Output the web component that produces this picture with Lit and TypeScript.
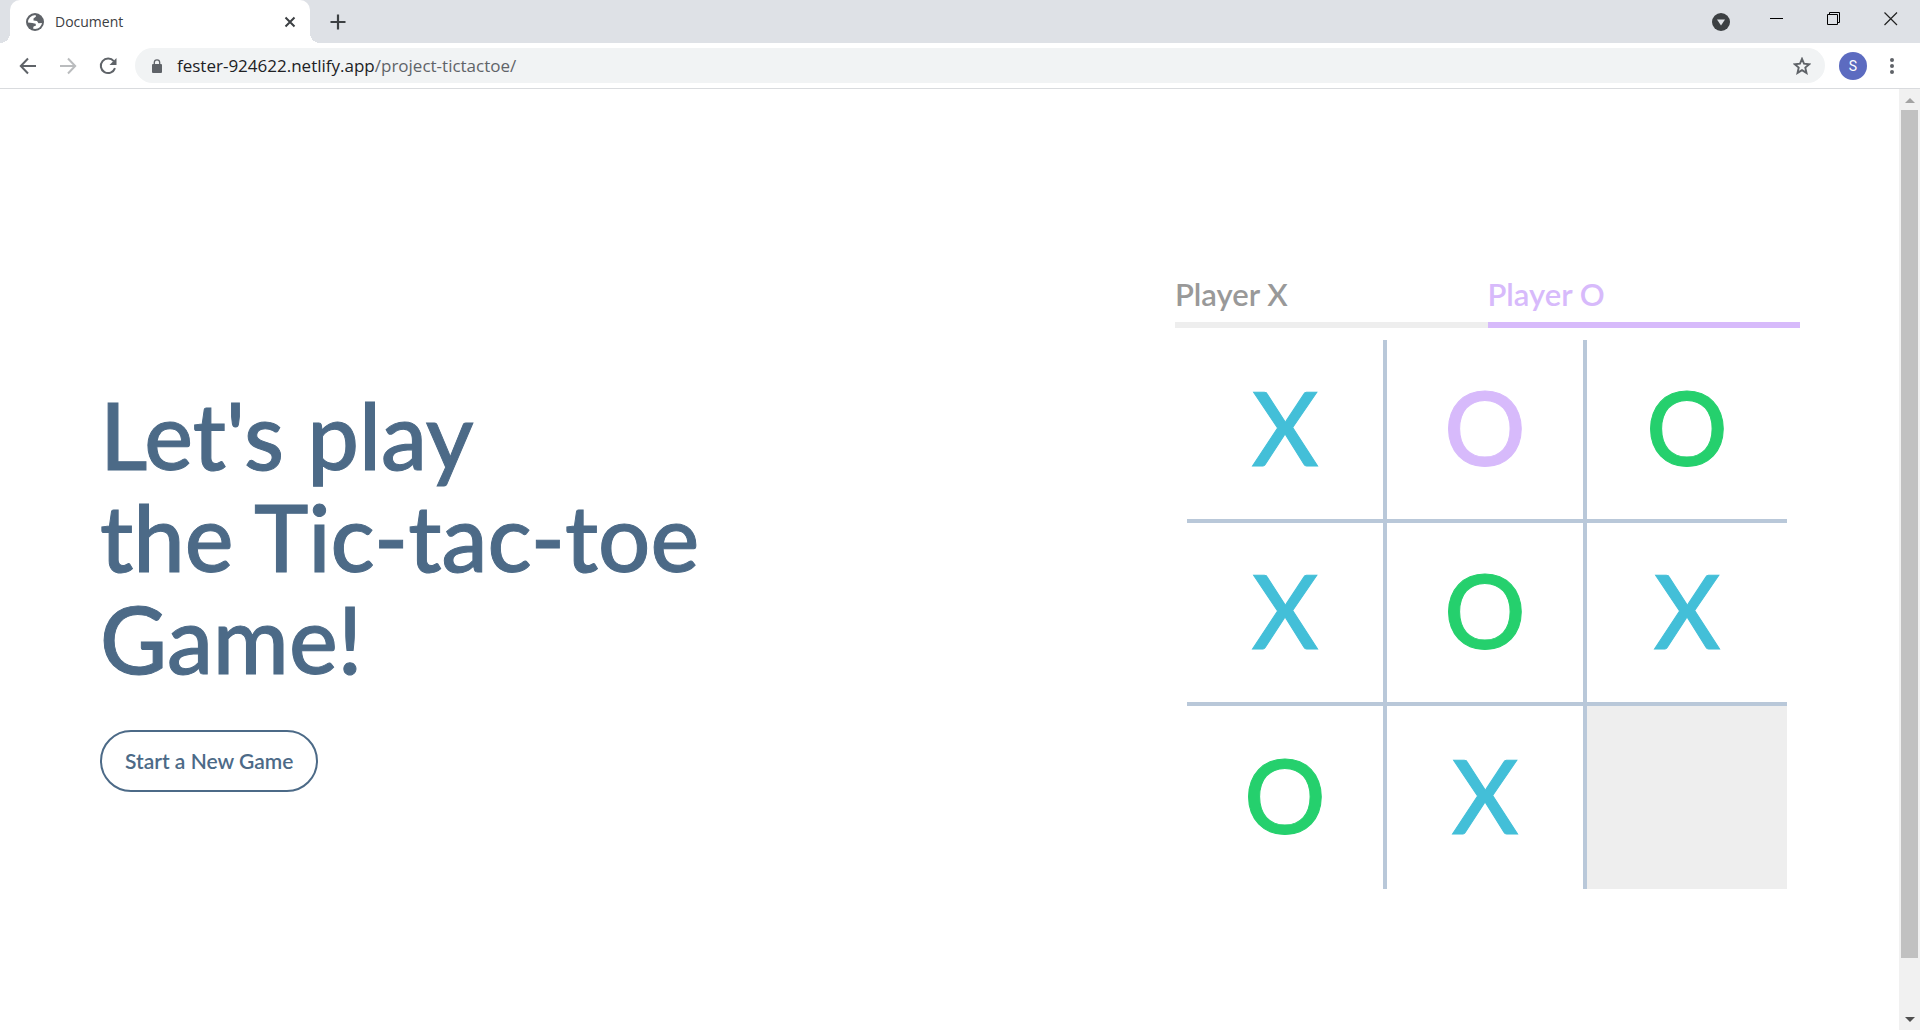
import { LitElement, html, svg, css } from "lit";
import { customElement, state } from "lit/decorators.js";
import { classMap } from "lit/directives/class-map.js";

const icon = (size: number, body: unknown) =>
  html`<svg class="icon" width=${size} height=${size} viewBox="0 0 ${size} ${size}" aria-hidden="true">${body}</svg>`;

const globe = icon(18, svg`
  <circle cx="9" cy="9" r="9" fill="#5f6368"/>
  <path fill="#fff" d="M9.500 2 L10 3.500 L7.500 5.500 L7.500 7.500 L11 8 L12.500 10.300 L16 10 Q15 15.600 9 16 L7 15.600 L7.600 13.600 L10 12.600 L9.600 10.800 L6.400 10 L2 9.600 Q2 3 9.500 2 Z"/>`);
const tabClose = icon(12, svg`<path d="M1.500 1.500 L10.500 10.500 M10.500 1.500 L1.500 10.500" stroke="#3c4043" stroke-width="2" fill="none"/>`);
const plus = icon(16, svg`<path d="M8 0.500 V15.500 M0.500 8 H15.500" stroke="#3c4043" stroke-width="2.200" fill="none"/>`);
const back = icon(18, svg`<path d="M17 9 H2.500 M9 1.500 L1.800 9 L9 16.500" stroke="#5f6368" stroke-width="2" fill="none"/>`);
const forward = icon(18, svg`<path d="M1 9 H15.500 M9 1.500 L16.200 9 L9 16.500" stroke="#babcbe" stroke-width="2" fill="none"/>`);
const reload = icon(18, svg`
  <path d="M14.800 4.200 A7.300 7.300 0 1 0 16 11.200" stroke="#5f6368" stroke-width="2" fill="none"/>
  <path d="M17.500 1 V8 H10.500 Z" fill="#5f6368"/>`);
const lock = icon(14, svg`
  <rect x="2" y="5" width="10" height="9" rx="1" fill="#5f6368"/>
  <path d="M4.300 6 V3.600 A2.700 2.700 0 0 1 9.700 3.600 V6" stroke="#5f6368" stroke-width="1.300" fill="none"/>`);
const star = icon(18, svg`<path d="M9 1.900 L11 6.700 L16.300 7.200 L12.300 10.600 L13.500 15.900 L9 13.100 L4.500 15.900 L5.700 10.600 L1.700 7.200 L7 6.700 Z" stroke="#5f6368" stroke-width="1.900" fill="none"/>`);
const dots = icon(18, svg`<g fill="#5f6368"><circle cx="9" cy="3" r="2"/><circle cx="9" cy="9" r="2"/><circle cx="9" cy="15" r="2"/></g>`);
const tabSearch = icon(18, svg`<circle cx="9" cy="9" r="9" fill="#3c4043"/><path d="M5 6.500 H13 L9 12.500 Z" fill="#dee1e6"/>`);
const minimize = icon(14, svg`<path d="M0 6.500 H13" stroke="#000" fill="none"/>`);
const restore = icon(14, svg`<path d="M0.500 2.500 H10.500 V12.500 H0.500 Z M2.500 2.500 V0.500 H12.500 V10.500 H10.500" stroke="#000" fill="none"/>`);
const windowClose = icon(14, svg`<path d="M0.500 0.500 L13 13 M13 0.500 L0.500 13" stroke="#222" stroke-width="1.200" fill="none"/>`);

@customElement("browser-bar")
class BrowserBar extends LitElement {
  static styles = css`
    :host { display: block; font-family: "Open Sans", "Noto Sans", sans-serif; }
    .icon { display: block; flex: none; }
    button { display: flex; align-items: center; justify-content: center; padding: 0; border: 0; background: none; font: inherit; }
    .tabs { display: flex; height: 43px; background: #dee1e6; padding-left: 10px; }
    .tab { position: relative; display: flex; align-items: center; box-sizing: border-box; width: 300px; padding: 0 14px 0 16px; background: #fff; border-radius: 10px 10px 0 0; }
    .tab::before, .tab::after { content: ""; position: absolute; bottom: 0; width: 10px; height: 10px; }
    .tab::before { left: -10px; background: radial-gradient(circle at 0 0, #dee1e6 10px, #fff 10px); }
    .tab::after { right: -10px; background: radial-gradient(circle at 100% 0, #dee1e6 10px, #fff 10px); }
    .title { flex: 1; padding-left: 11px; font-size: 14px; line-height: 20px; color: #3c4043; }
    .new { width: 16px; margin-left: 20px; }
    .window { display: flex; margin-left: auto; padding-right: 1px; }
    .window button { width: 57px; height: 38px; }
    .window .search { width: 54px; height: 43px; }
    .tools { display: flex; align-items: center; height: 45px; padding: 0 19px 0 8px; border-bottom: 1px solid #d9dbde; background: #fff; }
    .nav { width: 40px; height: 36px; }
    .address { display: flex; flex: 1; align-items: center; height: 35px; margin-left: 7px; border-radius: 18px; background: #f1f3f4; padding: 0 14px 0 15px; }
    .url { flex: 1; padding-left: 13px; font-size: 17px; line-height: 24px; color: #5f6368; text-decoration: none; }
    .domain { color: #202124; }
    .avatar { width: 28px; height: 28px; margin: 0 16px 0 14px; border-radius: 50%; background: #5c6bc0; color: #fff; font-family: Roboto, sans-serif; font-size: 14px; }
  `;
  render() {
    return html`
      <div class="tabs">
        <div class="tab">${globe}<span class="title">Document</span><button aria-label="Close tab">${tabClose}</button></div>
        <button class="new" aria-label="New tab">${plus}</button>
        <div class="window">
          <button class="search" aria-label="Search tabs">${tabSearch}</button>
          <button aria-label="Minimize">${minimize}</button>
          <button aria-label="Restore">${restore}</button>
          <button aria-label="Close">${windowClose}</button>
        </div>
      </div>
      <div class="tools">
        <button class="nav" aria-label="Back">${back}</button>
        <button class="nav" aria-label="Forward" disabled>${forward}</button>
        <button class="nav" aria-label="Reload">${reload}</button>
        <div class="address">
          ${lock}
          <a class="url" href="#"><span class="domain">fester-924622.netlify.app</span>/project-tictactoe/</a>
          <button aria-label="Bookmark this page">${star}</button>
        </div>
        <button class="avatar" aria-label="Profile">S</button>
        <button aria-label="Menu">${dots}</button>
      </div>`;
  }
}

type Mark = "X" | "O" | "";
interface Cell { mark: Mark; last?: boolean; hover?: boolean; }

const position: Cell[] = [
  { mark: "X" }, { mark: "O", last: true }, { mark: "O" },
  { mark: "X" }, { mark: "O" }, { mark: "X" },
  { mark: "O" }, { mark: "X" }, { mark: "", hover: true },
];

@customElement("tic-tac-toe")
class TicTacToe extends LitElement {
  @state() private cells: Cell[] = position;

  static styles = css`
    :host { display: flex; align-items: center; justify-content: space-between; padding: 0 99px 0 100px; font-family: Lato, sans-serif; font-weight: 600; }
    .intro { padding-top: 12px; }
    h1 { margin: 0 0 40px; font-size: 92px; font-weight: 500; line-height: 102px; color: #4c6a87; -webkit-text-stroke: 1px currentColor; }
    h1 span { display: block; }
    button { font: inherit; }
    .start { height: 62px; padding: 0 23px; border: 2px solid #4c6a87; border-radius: 31px; background: #fff; color: #4c6a87; font-size: 21px; }
    .game { width: 625px; }
    .players { display: grid; grid-template-columns: 1fr 1fr; font-size: 31px; line-height: 40px; color: #999; }
    .player { padding-bottom: 8px; border-bottom: 6px solid #eee; }
    .player.active { color: #d7bafb; border-color: #d7bafb; }
    .board { display: grid; grid-template-columns: repeat(3, 1fr); grid-auto-rows: 183px; padding: 12px 13px 0 12px; }
    .cell { padding: 0 0 6px; border: 0 solid #b9c8d9; background: none; font-size: 102px; font-weight: 500; line-height: 120px; -webkit-text-stroke: 1px currentColor; }
    .cell:not(:nth-child(3n)) { border-right-width: 4px; }
    .cell:nth-child(-n + 6) { border-bottom-width: 4px; }
    .x { color: #43bfd8; }
    .o { color: #25d06d; }
    .last { color: #d7bafb; }
    .hover { background: #eee; }
  `;
  private restart() {
    this.cells = position.map(() => ({ mark: "" as Mark }));
  }
  render() {
    return html`
      <section class="intro">
        <h1><span>Let's play</span><span>the Tic-tac-toe</span><span>Game!</span></h1>
        <button class="start" @click=${this.restart}>Start a New Game</button>
      </section>
      <section class="game">
        <div class="players"><div class="player">Player X</div><div class="player active">Player O</div></div>
        <div class="board">
          ${this.cells.map((c, i) => html`<button aria-label="Square ${i + 1} ${c.mark}"
            class=${classMap({ cell: true, x: c.mark === "X", o: c.mark === "O", last: !!c.last, hover: !!c.hover })}>${c.mark}</button>`)}
        </div>
      </section>`;
  }
}

@customElement("app-root")
class AppRoot extends LitElement {
  static styles = css`
    :host { display: flex; flex-direction: column; min-height: 100vh; background: #fff; }
    .page { display: flex; flex: 1; }
    tic-tac-toe { flex: 1; padding-top: 44px; }
    .scroll { display: flex; flex-direction: column; align-items: center; box-sizing: border-box; width: 21px; padding: 9px 0 8px; background: #f1f1f1; }
    .thumb { flex: 1; width: 17px; margin: 7px 0 59px; background: #c1c1c1; }
    .arrow { display: block; }
  `;
  render() {
    return html`
      <browser-bar></browser-bar>
      <div class="page">
        <tic-tac-toe></tic-tac-toe>
        <div class="scroll" aria-hidden="true">
          <svg class="arrow" width="10" height="5"><path d="M0 5 L5 0 L10 5 Z" fill="#a3a3a3"/></svg>
          <div class="thumb"></div>
          <svg class="arrow" width="10" height="5"><path d="M0 0 L5 5 L10 0 Z" fill="#505050"/></svg>
        </div>
      </div>`;
  }
}
